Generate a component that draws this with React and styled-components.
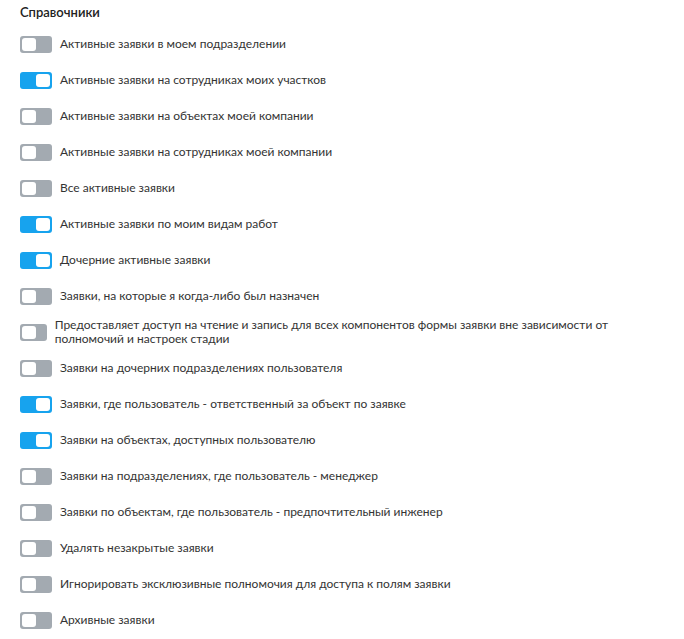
import React, { useState } from 'react';
import styled, { createGlobalStyle } from 'styled-components';

const GlobalStyle = createGlobalStyle`
  body {
    margin: 0;
    background: #fff;
    font-family: Lato, "Open Sans", "Liberation Sans", sans-serif;
  }
`;

const Page = styled.div`
  padding: 4px 20px 0 20px;
`;

const Title = styled.h3`
  margin: 0 0 6px 0;
  font-size: 13px;
  line-height: 16px;
  font-weight: 600;
  color: #222;
`;

const Row = styled.label`
  display: flex;
  align-items: center;
  gap: 8px;
  height: 36px;
  cursor: pointer;
`;

const Track = styled.span`
  position: relative;
  display: block;
  width: 32px;
  height: 17px;
  border-radius: 3px;
  background-color: ${(p) => (p.$on ? '#17a3ee' : '#a3aab1')};
  .knob {
    position: absolute;
    top: 2px;
    left: ${(p) => (p.$on ? 'auto' : '2px')};
    right: ${(p) => (p.$on ? '2px' : 'auto')};
    width: 14px;
    height: 13px;
    border-radius: 3px;
    background: #fff;
  }
`;

const Text = styled.span`
  font-size: 12px;
  line-height: 14px;
  color: #333;
`;

const items = [
  ['Активные заявки в моем подразделении', false],
  ['Активные заявки на сотрудниках моих участков', true],
  ['Активные заявки на объектах моей компании', false],
  ['Активные заявки на сотрудниках моей компании', false],
  ['Все активные заявки', false],
  ['Активные заявки по моим видам работ', true],
  ['Дочерние активные заявки', true],
  ['Заявки, на которые я когда-либо был назначен', false],
  [
    'Предоставляет доступ на чтение и запись для всех компонентов формы заявки вне зависимости от полномочий и настроек стадии',
    false,
  ],
  ['Заявки на дочерних подразделениях пользователя', false],
  ['Заявки, где пользователь - ответственный за объект по заявке', true],
  ['Заявки на объектах, доступных пользователю', true],
  ['Заявки на подразделениях, где пользователь - менеджер', false],
  ['Заявки по объектам, где пользователь - предпочтительный инженер', false],
  ['Удалять незакрытые заявки', false],
  ['Игнорировать эксклюзивные полномочия для доступа к полям заявки', false],
  ['Архивные заявки', false],
];

export default function App() {
  const [state, setState] = useState(items.map((i) => i[1]));
  const toggle = (idx) =>
    setState((s) => s.map((v, i) => (i === idx ? !v : v)));

  return (
    <Page>
      <GlobalStyle />
      <Title>Справочники</Title>
      {items.map(([text], idx) => (
        <Row key={idx} onClick={() => toggle(idx)}>
          <Track $on={state[idx]}>
            <span className="knob" />
          </Track>
          <Text>{text}</Text>
        </Row>
      ))}
    </Page>
  );
}
